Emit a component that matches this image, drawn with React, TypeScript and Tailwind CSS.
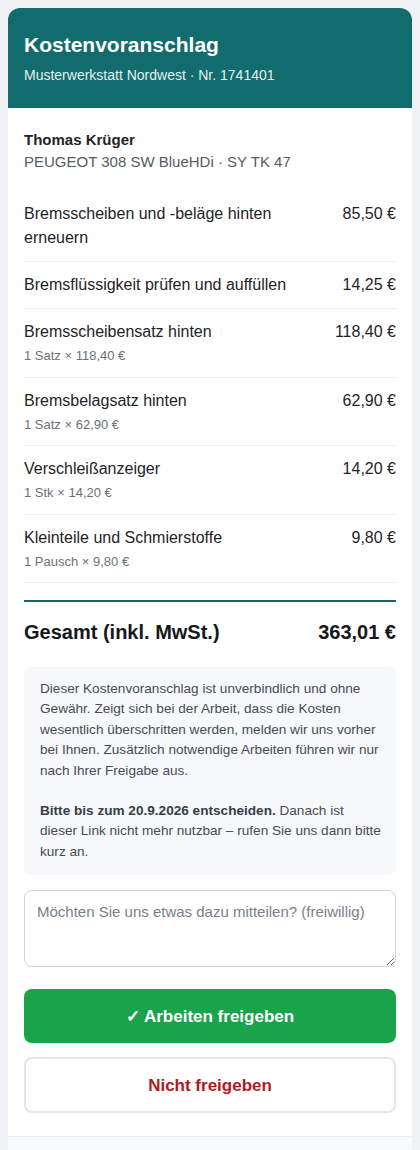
import React from "react";

const items = [
  { name: "Bremsscheiben und -beläge hinten erneuern", price: "85,50 €" },
  { name: "Bremsflüssigkeit prüfen und auffüllen", price: "14,25 €" },
  { name: "Bremsscheibensatz hinten", price: "118,40 €", sub: "1 Satz × 118,40 €" },
  { name: "Bremsbelagsatz hinten", price: "62,90 €", sub: "1 Satz × 62,90 €" },
  { name: "Verschleißanzeiger", price: "14,20 €", sub: "1 Stk × 14,20 €" },
  { name: "Kleinteile und Schmierstoffe", price: "9,80 €", sub: "1 Pausch × 9,80 €" },
];

export default function App() {
  return (
    <div
      className="min-h-[1150px] bg-[#f0f2f5] px-2 pt-2"
      style={{ fontFamily: '"Liberation Sans", Arial, sans-serif' }}
    >
      <div className="overflow-hidden rounded-t-xl bg-white">
        <div className="bg-[#126b6c] px-4 pt-[23px] pb-[23px] text-white">
          <h1 className="text-[21px] font-bold leading-7">Kostenvoranschlag</h1>
          <p className="mt-[6px] text-[14px] leading-[20px] text-[#e3f0f0]">
            Musterwerkstatt Nordwest · Nr. 1741401
          </p>
        </div>

        <div className="px-4 pt-[21px] pb-[23px]">
          <div className="text-[15px] font-bold leading-[22px] text-[#1f2328]">Thomas Krüger</div>
          <div className="text-[15px] leading-[22px] text-[#555b62]">PEUGEOT 308 SW BlueHDi · SY TK 47</div>

          <div className="mt-[18px]">
            {items.map((it) => (
              <div key={it.name} className="flex items-start justify-between gap-4 border-b border-[#eceef0] py-[11px]">
                <div className="min-w-0">
                  <div className="text-[16px] leading-[24px] text-[#1f2328]">{it.name}</div>
                  {it.sub && (
                    <div className="mt-[2px] text-[13px] leading-[19.5px] text-[#6b7178]">{it.sub}</div>
                  )}
                </div>
                <div className="shrink-0 whitespace-nowrap text-[16px] leading-[24px] text-[#1f2328]">{it.price}</div>
              </div>
            ))}
          </div>

          <div className="mt-[17px] flex items-center justify-between border-t-2 border-[#1a6466] pt-[16px]">
            <span className="text-[20px] font-bold leading-7 text-[#15181b]">Gesamt (inkl. MwSt.)</span>
            <span className="text-[20px] font-bold leading-7 text-[#15181b]">363,01 €</span>
          </div>

          <div className="mt-[21px] rounded-lg bg-[#f6f8fa] pl-4 pr-[12px] pt-3 pb-[13px] text-[13.6px] leading-[20.4px] text-[#464c54]">
            <p>
              Dieser Kostenvoranschlag ist unverbindlich und ohne Gewähr. Zeigt sich bei der Arbeit, dass die Kosten
              wesentlich überschritten werden, melden wir uns vorher bei Ihnen. Zusätzlich notwendige Arbeiten führen
              wir nur nach Ihrer Freigabe aus.
            </p>
            <p className="mt-[20px]">
              <strong className="font-bold text-[#383d44]">Bitte bis zum 20.9.2026 entscheiden.</strong> Danach ist
              dieser Link nicht mehr nutzbar – rufen Sie uns dann bitte kurz an.
            </p>
          </div>

          <textarea
            className="mt-[15px] block h-[77px] w-full rounded-lg border border-[#cfd3d8] px-3 py-[10px] text-[15px] leading-[22px] text-[#1f2328] placeholder:text-[#7a8088] outline-none"
            style={{ fontFamily: '"Liberation Sans", Arial, sans-serif' }}
            placeholder="Möchten Sie uns etwas dazu mitteilen? (freiwillig)"
          />

          <button className="mt-[22px] flex h-[54px] w-full items-center justify-center rounded-lg bg-[#19a44b] text-[17px] font-bold text-white">
            ✓ Arbeiten freigeben
          </button>
          <button className="mt-[14px] flex h-[56px] w-full items-center justify-center rounded-lg border-2 border-[#e4e6e9] bg-white text-[17px] font-bold text-[#b3191c]">
            Nicht freigeben
          </button>
        </div>

        <div className="h-[40px] border-t border-[#eceef0] bg-[#f8f9fb]" />
      </div>
    </div>
  );
}
